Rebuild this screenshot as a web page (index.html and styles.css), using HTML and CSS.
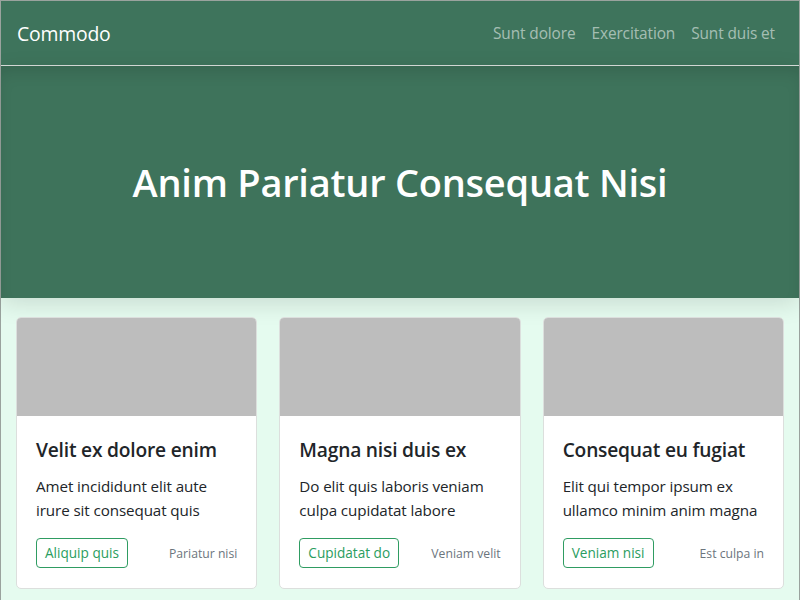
FILE: index.html
```html
<!DOCTYPE html>
<html lang="en">
<head>
<meta charset="utf-8">
<title>Commodo</title>
<link rel="stylesheet" href="styles.css">
</head>
<body>
<div class="page">
  <header class="navbar">
    <a class="brand" href="#">Commodo</a>
    <nav class="links">
      <a href="#">Sunt dolore</a>
      <a href="#">Exercitation</a>
      <a href="#">Sunt duis et</a>
    </nav>
  </header>
  <section class="hero">
    <h1>Anim Pariatur Consequat Nisi</h1>
  </section>
  <main class="cards">
    <article class="card">
      <div class="thumb"></div>
      <div class="body">
        <h2>Velit ex dolore enim</h2>
        <p>Amet incididunt elit aute irure sit consequat quis</p>
        <div class="actions">
          <a class="btn" href="#">Aliquip quis</a>
          <span class="meta">Pariatur nisi</span>
        </div>
      </div>
    </article>
    <article class="card">
      <div class="thumb"></div>
      <div class="body">
        <h2>Magna nisi duis ex</h2>
        <p>Do elit quis laboris veniam culpa cupidatat labore</p>
        <div class="actions">
          <a class="btn" href="#">Cupidatat do</a>
          <span class="meta">Veniam velit</span>
        </div>
      </div>
    </article>
    <article class="card">
      <div class="thumb"></div>
      <div class="body">
        <h2>Consequat eu fugiat</h2>
        <p>Elit qui tempor ipsum ex ullamco minim anim magna</p>
        <div class="actions">
          <a class="btn" href="#">Veniam nisi</a>
          <span class="meta">Est culpa in</span>
        </div>
      </div>
    </article>
  </main>
</div>
</body>
</html>
```
FILE: styles.css
```css
* { box-sizing: border-box; }
html, body { margin: 0; padding: 0; }
body {
  font-family: "Open Sans", "Noto Sans", sans-serif;
  background: #e5fbef;
  color: #212529;
}
.page {
  min-height: 100vh;
  border: 1px solid #9aa39e;
  border-bottom: none;
  background: #e5fbef;
}
.navbar {
  height: 65px;
  background: #3e745c;
  border-bottom: 1px solid #d9dedb;
  display: flex;
  align-items: center;
  justify-content: space-between;
  padding: 0 16px;
}
.brand {
  color: #fff;
  text-decoration: none;
  font-size: 19.4px;
  letter-spacing: -0.2px;
}
.links { display: flex; gap: 0; }
.links a {
  color: rgba(255,255,255,0.55);
  text-decoration: none;
  font-size: 15.4px;
  padding: 0 8px;
  letter-spacing: -0.1px;
}
.hero {
  height: 232px;
  background: #3e735b;
  display: flex;
  align-items: center;
  justify-content: center;
  box-shadow: inset 0 10px 18px -6px rgba(0,0,0,0.14), 0 6px 22px rgba(0,0,0,0.12);
}
.hero h1 {
  margin: 0;
  color: #fff;
  font-size: 38px;
  font-weight: 600;
  letter-spacing: -0.25px;
}
.cards {
  display: grid;
  grid-template-columns: repeat(3, 1fr);
  gap: 22px;
  padding: 19px 15px 0;
}
.card {
  background: #fff;
  border: 1px solid #dcdfdd;
  border-radius: 5px;
  overflow: hidden;
}
.thumb {
  height: 98px;
  background: #bdbdbd;
}
.body { padding: 20px 19px 20px; }
.body h2 {
  margin: 0 0 10px;
  font-size: 19.2px;
  font-weight: 600;
  line-height: 28px;
  letter-spacing: -0.2px;
}
.body p {
  margin: 0 0 16px;
  font-size: 15.2px;
  line-height: 24px;
  letter-spacing: -0.1px;
}
.actions {
  display: flex;
  align-items: center;
  justify-content: space-between;
}
.btn {
  display: inline-block;
  height: 30px;
  line-height: 28px;
  padding: 0 8px;
  border: 1px solid #2f9c62;
  border-radius: 4px;
  color: #2a9d60;
  font-size: 13.6px;
  text-decoration: none;
}
.meta {
  color: #6c757d;
  font-size: 12.2px;
}
```
